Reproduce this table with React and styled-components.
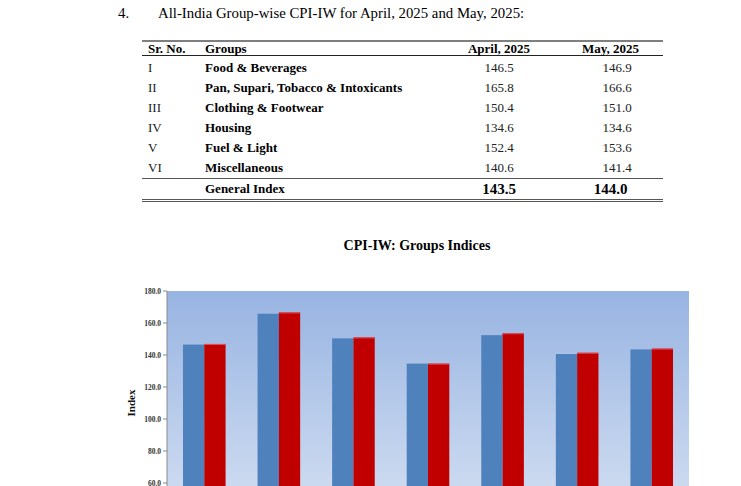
import React from "react"
import styled, { createGlobalStyle } from "styled-components"

const GlobalStyle = createGlobalStyle`
  html, body {
    margin: 0;
    padding: 0;
    background: #ffffff;
  }
  body {
    font-family: "Liberation Serif", "Times New Roman", serif;
    color: #000;
  }
`

const Page = styled.div`
  width: 741px;
  padding-top: 4px;
`

const Heading = styled.div`
  display: flex;
  margin-left: 118px;
  font-size: 14.8px;
  line-height: 18px;
`

const HeadingNum = styled.span`
  width: 40px;
`

const Table = styled.table`
  margin: 18px 0 0 142px;
  width: 521px;
  border-collapse: collapse;
  border-top: 2px solid #7f7f7f;
  border-bottom: 3px double #555;
  font-size: 13px;
  table-layout: fixed;
`

const Th = styled.th`
  height: 13px;
  padding: 0 0 0 ${(p) => p.$pl || "0"};
  line-height: 13px;
  font-weight: bold;
  text-align: ${(p) => p.$align || "left"};
  border-bottom: 1px solid #222;
`

const Row = styled.tr`
  height: 20px;
  border-top: ${(p) => (p.$total ? "1.5px solid #555" : "none")};
  &:first-child td {
    padding-top: 2px;
  }
`

const Td = styled.td`
  padding: 0 0 0 ${(p) => p.$pl || "0"};
  line-height: 20px;
  text-align: ${(p) => p.$align || "left"};
  font-weight: ${(p) => (p.$bold ? "bold" : "normal")};
  font-size: ${(p) => (p.$big ? "15px" : "13px")};
  color: ${(p) => (p.$muted ? "#222" : "#000")};
`

const ChartBlock = styled.div`
  margin: 36px 0 0 100px;
  width: 634px;
`

const ChartTitle = styled.div`
  text-align: center;
  font-weight: bold;
  font-size: 14px;
  line-height: 16px;
`

const rows = [
  ["I", "Food & Beverages", "146.5", "146.9"],
  ["II", "Pan, Supari, Tobacco & Intoxicants", "165.8", "166.6"],
  ["III", "Clothing & Footwear", "150.4", "151.0"],
  ["IV", "Housing", "134.6", "134.6"],
  ["V", "Fuel & Light", "152.4", "153.6"],
  ["VI", "Miscellaneous", "140.6", "141.4"],
]

const april = [146.5, 165.8, 150.4, 134.6, 152.4, 140.6, 143.5]
const may = [146.9, 166.6, 151.0, 134.6, 153.6, 141.4, 144.0]

// chart geometry, in svg units (svg starts at page x=100)
const PLOT_TOP = 37
const PLOT_LEFT = 67
const PLOT_RIGHT = 589
const PX_PER_UNIT = 1.6
const yFor = (v) => PLOT_TOP + (180 - v) * PX_PER_UNIT

const Chart = () => {
  const groupW = (PLOT_RIGHT - PLOT_LEFT) / april.length
  const barW = 21.3
  const ticks = [180, 160, 140, 120, 100, 80, 60, 40]
  return (
    <svg width="634" height="300" style={{ display: "block" }}>
      <defs>
        <linearGradient id="plotBg" x1="0" y1="0" x2="0" y2="1">
          <stop offset="0" stopColor="#98b4e2" />
          <stop offset="1" stopColor="#e2eaf6" />
        </linearGradient>
      </defs>
      <rect
        x={PLOT_LEFT}
        y={PLOT_TOP}
        width={PLOT_RIGHT - PLOT_LEFT}
        height={280}
        fill="url(#plotBg)"
      />
      {april.map((v, i) => {
        const c = PLOT_LEFT + groupW * (i + 0.5)
        return (
          <g key={i}>
            <rect x={c - barW} y={yFor(v)} width={barW} height={300} fill="#4f81bd" />
            <rect x={c} y={yFor(may[i])} width={barW} height={300} fill="#c00000" />
            <line x1={c} x2={c + barW} y1={yFor(may[i]) + 0.5} y2={yFor(may[i]) + 0.5} stroke="#e0505a" strokeWidth="1" />
          </g>
        )
      })}
      <line x1={PLOT_LEFT} x2={PLOT_LEFT} y1={PLOT_TOP} y2={300} stroke="#8a8a8a" strokeWidth="1" />
      {ticks.map((t) => (
        <g key={t}>
          <line x1={PLOT_LEFT - 4} x2={PLOT_LEFT} y1={yFor(t)} y2={yFor(t)} stroke="#8a8a8a" strokeWidth="1" />
          <text
            x={PLOT_LEFT - 6}
            y={yFor(t) + 2.5}
            textAnchor="end"
            fontFamily="Liberation Serif, serif"
            fontWeight="bold"
            fontSize="7.5"
            fill="#333"
          >
            {t.toFixed(1)}
          </text>
        </g>
      ))}
      <text
        x={0}
        y={0}
        transform={`translate(35, ${yFor(110)}) rotate(-90)`}
        textAnchor="middle"
        fontFamily="Liberation Serif, serif"
        fontWeight="bold"
        fontSize="11"
        fill="#111"
      >
        Index
      </text>
    </svg>
  )
}

const App = () => {
  return (
    <Page>
      <GlobalStyle />
      <Heading>
        <HeadingNum>4.</HeadingNum>
        <span>All-India Group-wise CPI-IW for April, 2025 and May, 2025:</span>
      </Heading>
      <Table>
        <colgroup>
          <col style={{ width: 56 }} />
          <col style={{ width: 242 }} />
          <col style={{ width: 118 }} />
          <col style={{ width: 105 }} />
        </colgroup>
        <thead>
          <tr>
            <Th $pl="6px">Sr. No.</Th>
            <Th $pl="7px">Groups</Th>
            <Th $align="center">April, 2025</Th>
            <Th $align="center">May, 2025</Th>
          </tr>
        </thead>
        <tbody>
          {rows.map(([sr, group, a, m]) => (
            <Row key={sr}>
              <Td $pl="6px" $muted>{sr}</Td>
              <Td $pl="7px" $bold>{group}</Td>
              <Td $align="center" $muted>{a}</Td>
              <Td $align="center" $pl="13px" $muted>{m}</Td>
            </Row>
          ))}
          <Row $total>
            <Td />
            <Td $pl="7px" $bold>General Index</Td>
            <Td $align="center" $bold $big>143.5</Td>
            <Td $align="center" $bold $big>144.0</Td>
          </Row>
        </tbody>
      </Table>
      <ChartBlock>
        <ChartTitle>CPI-IW: Groups Indices</ChartTitle>
        <Chart />
      </ChartBlock>
    </Page>
  )
}

export default App
